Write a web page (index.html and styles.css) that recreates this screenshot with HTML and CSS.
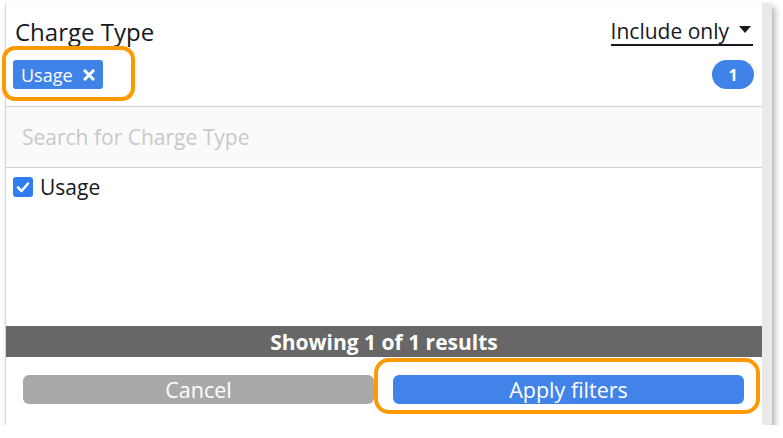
FILE: index.html
```html
<!DOCTYPE html>
<html>
<head>
<meta charset="utf-8">
<link rel="stylesheet" href="styles.css">
</head>
<body>
<div class="panel">
  <div class="main">
    <div class="header">
      <div class="title-row">
        <span class="title">Charge Type</span>
        <span class="mode">Include only <svg class="caret" width="12" height="8" viewBox="0 0 12 8"><path d="M0 0 H12 L6 7 Z" fill="#16191f"/></svg></span>
      </div>
      <div class="token-row">
        <span class="token">Usage <svg class="x" width="12" height="12" viewBox="0 0 12 12"><path d="M2 2 L10 10 M10 2 L2 10" stroke="#fff" stroke-width="3" stroke-linecap="square"/></svg></span>
        <span class="badge">1</span>
      </div>
    </div>
    <div class="search">Search for Charge Type</div>
    <div class="list">
      <label class="item"><span class="check"><svg width="14" height="12" viewBox="0 0 14 12"><path d="M2 6.5 L5.5 10 L12 2.5" stroke="#fff" stroke-width="2.6" fill="none" stroke-linecap="round" stroke-linejoin="round"/></svg></span>Usage</label>
    </div>
    <div class="status">Showing 1 of 1 results</div>
    <div class="footer">
      <button class="btn cancel">Cancel</button>
      <button class="btn apply">Apply filters</button>
    </div>
  </div>
  <div class="scroll"></div>
  <div class="hl hl-token"></div>
  <div class="hl hl-apply"></div>
</div>
</body>
</html>
```
FILE: styles.css
```css
html, body {
  margin: 0;
  padding: 0;
  background: #fff;
}
body {
  font-family: "Open Sans", "Noto Sans", sans-serif;
  color: #16191f;
}
.panel {
  position: relative;
  margin: 3px 0 0 5px;
  width: 766px;
  height: 422px;
  display: flex;
  background: #fff;
  border-left: 1px solid #d6d6d6;
  box-shadow: 3px 4px 6px rgba(0, 0, 0, 0.3);
}
.main {
  flex: 1;
  display: flex;
  flex-direction: column;
  min-width: 0;
}
.scroll {
  width: 10px;
  background: #e9e9e9;
}
.header {
  height: 103px;
  border-bottom: 1px solid #d3d3d3;
  box-sizing: content-box;
}
.title-row {
  display: flex;
  justify-content: space-between;
  align-items: flex-start;
  padding: 13px 9px 0 9px;
}
.title {
  font-size: 24px;
  line-height: 32px;
}
.mode {
  font-size: 21px;
  line-height: 26px;
  margin-top: 2px;
  border-bottom: 2px solid #16191f;
  padding-right: 2px;
  display: flex;
  align-items: center;
  gap: 10px;
}
.caret {
  margin-top: -3px;
}
.token-row {
  display: flex;
  justify-content: space-between;
  align-items: center;
  margin-top: 12px;
  padding: 0 8px 0 7px;
}
.token {
  height: 29px;
  display: flex;
  align-items: center;
  gap: 10px;
  padding: 0 8px 0 8px;
  background: #3f82e8;
  color: #fff;
  font-size: 18px;
  border-radius: 3px;
}
.badge {
  width: 42px;
  height: 29px;
  border-radius: 15px;
  background: #3f82e8;
  color: #fff;
  font-weight: 700;
  font-size: 16px;
  display: flex;
  align-items: center;
  justify-content: center;
}
.search {
  height: 60px;
  background: #fafafa;
  border-bottom: 1px solid #d0d0d0;
  padding-left: 16px;
  display: flex;
  align-items: center;
  font-size: 21px;
  color: #c9c9c9;
}
.list {
  flex: 1;
  padding: 6px 7px;
}
.item {
  display: flex;
  align-items: center;
  gap: 7px;
  font-size: 21px;
  line-height: 26px;
}
.check {
  width: 20px;
  height: 20px;
  border-radius: 3px;
  background: #2f7ef0;
  display: flex;
  align-items: center;
  justify-content: center;
}
.status {
  height: 31px;
  background: #676767;
  color: #fff;
  font-weight: 700;
  font-size: 21px;
  display: flex;
  align-items: center;
  justify-content: center;
}
.footer {
  height: 68px;
  display: flex;
  gap: 19px;
  padding: 18px 18px 0 17px;
  box-sizing: border-box;
}
.btn {
  flex: 1;
  height: 29px;
  border: none;
  border-radius: 6px;
  color: #fff;
  font-family: "Open Sans", "Noto Sans", sans-serif;
  font-size: 21.5px;
  line-height: 29px;
  padding: 0;
}
.cancel {
  background: #a9a9a9;
}
.apply {
  background: #4283ea;
}
.hl {
  position: absolute;
  border: 4px solid #ff9900;
  border-radius: 13px;
  box-sizing: border-box;
}
.hl-token {
  left: -4px;
  top: 43px;
  width: 133px;
  height: 55px;
}
.hl-apply {
  left: 368px;
  top: 355px;
  width: 386px;
  height: 56px;
  border-radius: 15px;
}
```
